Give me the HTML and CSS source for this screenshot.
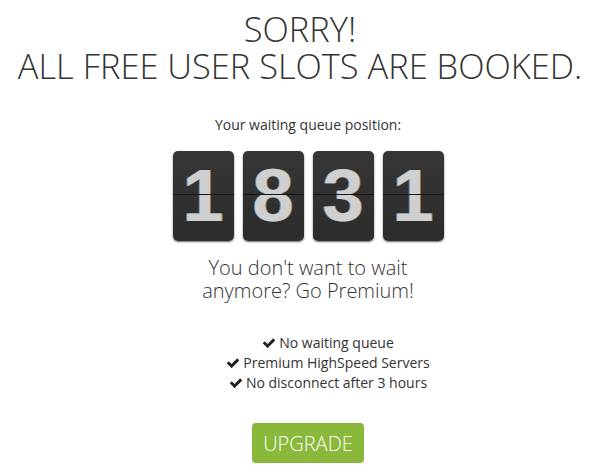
FILE: index.html
```html
<!DOCTYPE html>
<html lang="en">
<head>
<meta charset="UTF-8" />
<title>Queue</title>
<link rel="stylesheet" href="styles.css">
</head>
<body>
<div id="queue" role="main">
  <h1>SORRY!<br>ALL FREE USER SLOTS ARE BOOKED.</h1>

  <div class="offer">
    <p class="queue-label">Your waiting queue position:</p>

    <div class="counter">
      <span class="flip">1</span>
      <span class="flip">8</span>
      <span class="flip">3</span>
      <span class="flip">1</span>
    </div>

    <h2>You don't want to wait<br>anymore? Go Premium!</h2>

    <ul class="perks">
      <li><svg class="check" viewBox="0 0 1792 1792"><path d="M1671 566q0 40-28 68l-724 724-136 136q-28 28-68 28t-68-28l-136-136-362-362q-28-28-28-68t28-68l136-136q28-28 68-28t68 28l294 295 656-657q28-28 68-28t68 28l136 136q28 28 28 68z"/></svg>No waiting queue</li>
      <li><svg class="check" viewBox="0 0 1792 1792"><path d="M1671 566q0 40-28 68l-724 724-136 136q-28 28-68 28t-68-28l-136-136-362-362q-28-28-28-68t28-68l136-136q28-28 68-28t68 28l294 295 656-657q28-28 68-28t68 28l136 136q28 28 28 68z"/></svg>Premium HighSpeed Servers</li>
      <li><svg class="check" viewBox="0 0 1792 1792"><path d="M1671 566q0 40-28 68l-724 724-136 136q-28 28-68 28t-68-28l-136-136-362-362q-28-28-28-68t28-68l136-136q28-28 68-28t68 28l294 295 656-657q28-28 68-28t68 28l136 136q28 28 28 68z"/></svg>No disconnect after 3 hours</li>
    </ul>

    <button id="upgradeButton" type="button">UPGRADE</button>
  </div>
</div>
</body>
</html>
```

FILE: styles.css
```css
/* base */
body {
  background: #fff;
  font-family: "Open Sans", Arial, sans-serif;
  color: #333;
  text-align: center;
  margin: 0;
  padding: 0;
}
#queue {
  display: flex;
  flex-direction: column;
  align-items: center;
}
h1 {
  margin: 10px 0 0;
  font-size: 34.4px;
  line-height: 37px;
  font-weight: 300;
  color: #333;
}
.offer {
  align-self: stretch;
  padding-left: 16px;
  display: flex;
  flex-direction: column;
  align-items: center;
}
.queue-label {
  margin: 32px 0 0;
  font-size: 14px;
  line-height: 18px;
  color: #333;
}
/* flip counter */
.counter {
  display: flex;
  gap: 9px;
  margin-top: 17px;
}
.flip {
  position: relative;
  width: 61px;
  height: 90px;
  border-radius: 5px;
  background: linear-gradient(#363636, #2c2c2c);
  box-shadow: 0 1px 2px rgba(0, 0, 0, 0.6);
  font-family: "Liberation Sans", Arial, sans-serif;
  font-weight: 700;
  font-size: 74px;
  line-height: 90px;
  color: #cfcfcf;
  text-shadow: -1px 0 0 #5a8fc0, 1px 0 0 #b5793a;
}
.flip::after {
  content: "";
  position: absolute;
  left: 0;
  right: 0;
  top: 43px;
  height: 1px;
  background: #151515;
}
h2 {
  margin: 15px 0 0;
  font-size: 20px;
  line-height: 23px;
  font-weight: 300;
  color: #333;
}
.perks {
  list-style: none;
  margin: 31px 0 0;
  padding: 0 0 0 40px;
  font-size: 14px;
  line-height: 20px;
  color: #333;
}
.perks li {
  display: flex;
  align-items: center;
  justify-content: center;
}
.check {
  width: 14px;
  height: 14px;
  margin-right: 3px;
  fill: #222;
}
#upgradeButton {
  margin-top: 30px;
  padding: 0 11px;
  height: 40px;
  border: none;
  border-radius: 4px;
  background: #8ab83a;
  color: #fff;
  font-family: "Open Sans", Arial, sans-serif;
  font-weight: 300;
  font-size: 20px;
  cursor: pointer;
}
```
